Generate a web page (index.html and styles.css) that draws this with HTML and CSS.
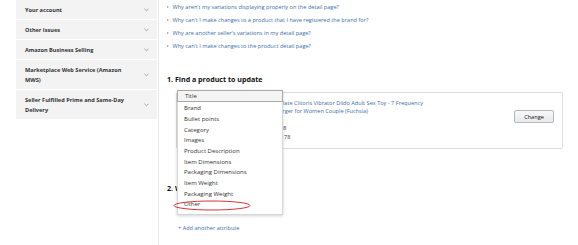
FILE: index.html
```html
<!DOCTYPE html>
<html>
<head>
<meta charset="utf-8">
<link rel="stylesheet" href="styles.css">
</head>
<body>
<aside class="sidebar">
  <div class="side-item"><span>Your account</span><svg class="chev" viewBox="0 0 6 4"><polyline points="0.5,0.5 3,3 5.5,0.5"/></svg></div>
  <div class="side-item"><span>Other Issues</span><svg class="chev" viewBox="0 0 6 4"><polyline points="0.5,0.5 3,3 5.5,0.5"/></svg></div>
  <div class="side-item"><span>Amazon Business Selling</span><svg class="chev" viewBox="0 0 6 4"><polyline points="0.5,0.5 3,3 5.5,0.5"/></svg></div>
  <div class="side-item"><span>Marketplace Web Service (Amazon MWS)</span><svg class="chev" viewBox="0 0 6 4"><polyline points="0.5,0.5 3,3 5.5,0.5"/></svg></div>
  <div class="side-item"><span>Seller Fulfilled Prime and Same-Day Delivery</span><svg class="chev" viewBox="0 0 6 4"><polyline points="0.5,0.5 3,3 5.5,0.5"/></svg></div>
</aside>
<main class="main">
  <ul class="links">
    <li><a href="#">Why aren't my variations displaying properly on the detail page?</a></li>
    <li><a href="#">Why can't I make changes to a product that I have registered the brand for?</a></li>
    <li><a href="#">Why are another seller's variations in my detail page?</a></li>
    <li><a href="#">Why can't I make changes to the product detail page?</a></li>
  </ul>
  <h2 class="heading h1">1. Find a product to update</h2>
  <div class="card">
    <div class="thumb"></div>
    <div class="info">
      <a href="#" class="ptitle">Rechargeable Simulate Clitoris Vibrator Dildo Adult Sex Toy - 7 Frequency<br>Tone with USB Charger for Women Couple (Fuchsia)</a>
      <div class="meta">ASIN: B07Q5KX1XQ8</div>
      <div class="meta">SKU: MX-0423-151178</div>
    </div>
    <button class="change">Change</button>
  </div>
  <h2 class="heading h2">2. What to update</h2>
  <a href="#" class="add">+ Add another attribute</a>

  <div class="dropdown">
    <div class="opt selected">Title</div>
    <div class="opt">Brand</div>
    <div class="opt">Bullet points</div>
    <div class="opt">Category</div>
    <div class="opt">Images</div>
    <div class="opt">Product Description</div>
    <div class="opt">Item Dimensions</div>
    <div class="opt">Packaging Dimensions</div>
    <div class="opt">Item Weight</div>
    <div class="opt">Packaging Weight</div>
    <div class="opt">Other</div>
  </div>
  <svg class="circle" viewBox="0 0 78 11"><ellipse cx="39" cy="5.5" rx="38" ry="4.5"/></svg>
</main>
</body>
</html>
```

FILE: styles.css
```css
html, body {
  margin: 0;
  padding: 0;
  background: #fff;
}
body {
  display: flex;
  align-items: flex-start;
  font-family: "Open Sans", "Noto Sans", sans-serif;
  color: #333;
  height: 245px;
  overflow: hidden;
}
a {
  color: #3a6ea8;
  text-decoration: none;
}
.sidebar {
  width: 141px;
  margin-left: 16px;
  background: #f3f3f3;
  flex: none;
}
.side-item {
  display: flex;
  align-items: center;
  justify-content: space-between;
  padding: 4.5px 8px 4.5px 9px;
  line-height: 10px;
  font-size: 5.6px;
  font-weight: 700;
  color: #333;
  border-bottom: 1px solid #fff;
}
.side-item span {
  max-width: 100px;
}
.chev {
  width: 5px;
  height: 4px;
  flex: none;
}
.chev polyline {
  fill: none;
  stroke: #8a8a8a;
  stroke-width: 0.9;
}
.main {
  position: relative;
  flex: 1;
  margin-left: 1px;
  border-left: 1px solid #ececec;
  height: 245px;
  padding-left: 8px;
  box-sizing: border-box;
}
.links {
  list-style: none;
  margin: 0;
  padding: 0.5px 0 0 0;
}
.links li {
  line-height: 13px;
  font-size: 5.6px;
  display: flex;
  align-items: center;
}
.links li::before {
  content: "";
  width: 0;
  height: 0;
  border-left: 2.5px solid #999;
  border-top: 1.6px solid transparent;
  border-bottom: 1.6px solid transparent;
  margin-right: 3.5px;
}
.heading {
  margin: 0;
  font-size: 7.1px;
  line-height: 10px;
  font-weight: 700;
  color: #111;
}
.h1 {
  margin-top: 21.5px;
}
.card {
  margin: 8px 15px 0 9px;
  height: 57px;
  box-sizing: border-box;
  border: 1px solid #ddd;
  border-radius: 2px;
  display: flex;
  align-items: flex-start;
}
.thumb {
  width: 40px;
  height: 40px;
  margin: 6px 6px 6px 10px;
  background: #eee;
  flex: none;
}
.info {
  flex: 1;
  padding-top: 5.5px;
  font-size: 5.6px;
}
.ptitle {
  display: block;
  line-height: 8.5px;
  margin-bottom: 8px;
}
.meta {
  line-height: 9px;
  color: #333;
}
.change {
  margin: 17px 8px 0 0;
  width: 40px;
  height: 13px;
  padding: 0;
  font-family: inherit;
  font-size: 5.6px;
  color: #111;
  border: 1px solid #b4b7bc;
  border-radius: 2px;
  background: linear-gradient(#f8f8f9, #e8e9ec);
  flex: none;
}
.h2 {
  margin-top: 34px;
}
.add {
  display: block;
  margin: 31px 0 0 11px;
  font-size: 5.6px;
  line-height: 8px;
}
.dropdown {
  position: absolute;
  left: 18px;
  top: 90px;
  width: 106px;
  box-sizing: border-box;
  background: #fff;
  border: 1px solid #d6d6d6;
  box-shadow: 0 1px 3px rgba(0, 0, 0, 0.18);
  padding-bottom: 3.6px;
}
.opt {
  height: 10.7px;
  line-height: 10.7px;
  padding-left: 6px;
  font-size: 6px;
  color: #333;
}
.opt.selected {
  height: 10px;
  line-height: 10px;
  margin: -1px -1px 1.3px -1px;
  padding-left: 7px;
  border: 1px solid #a9a9a9;
  background: #f4f4f4;
}
.circle {
  position: absolute;
  left: 14px;
  top: 200px;
  width: 78px;
  height: 11px;
  overflow: visible;
}
.circle ellipse {
  fill: none;
  stroke: #d2343b;
  stroke-width: 1;
}
```
